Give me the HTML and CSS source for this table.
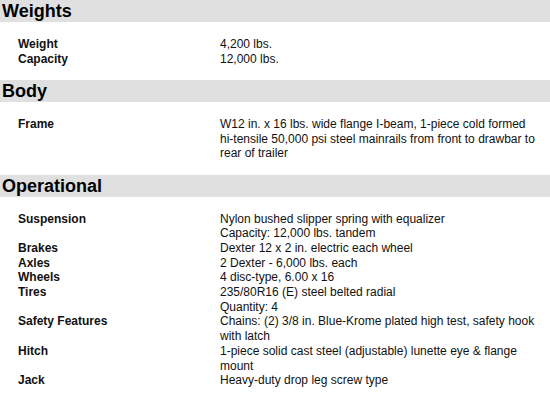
FILE: index.html
```html
<!DOCTYPE html>
<html>
<head>
<meta charset="utf-8">
<link rel="stylesheet" href="styles.css">
</head>
<body>
<section class="group">
  <h2 class="bar">Weights</h2>
  <dl class="specs">
    <dt>Weight</dt><dd>4,200 lbs.</dd>
    <dt>Capacity</dt><dd>12,000 lbs.</dd>
  </dl>
</section>
<section class="group">
  <h2 class="bar">Body</h2>
  <dl class="specs">
    <dt>Frame</dt><dd>W12 in. x 16 lbs. wide flange I-beam, 1-piece cold formed <span class="nowrap">hi-tensile</span> 50,000 psi steel mainrails from front to drawbar to rear of trailer</dd>
  </dl>
</section>
<section class="group">
  <h2 class="bar">Operational</h2>
  <dl class="specs">
    <dt>Suspension</dt><dd>Nylon bushed slipper spring with equalizer<br>Capacity: 12,000 lbs. tandem</dd>
    <dt>Brakes</dt><dd>Dexter 12 x 2 in. electric each wheel</dd>
    <dt>Axles</dt><dd>2 Dexter - 6,000 lbs. each</dd>
    <dt>Wheels</dt><dd>4 disc-type, 6.00 x 16</dd>
    <dt>Tires</dt><dd>235/80R16 (E) steel belted radial<br>Quantity: 4</dd>
    <dt>Safety Features</dt><dd>Chains: (2) 3/8 in. Blue-Krome plated high test, safety hook with latch</dd>
    <dt>Hitch</dt><dd>1-piece solid cast steel (adjustable) lunette eye &amp; flange mount</dd>
    <dt>Jack</dt><dd>Heavy-duty drop leg screw type</dd>
  </dl>
</section>
</body>
</html>
```
FILE: styles.css
```css
html, body {
  margin: 0;
  padding: 0;
  background: #fff;
}
body {
  font-family: "Liberation Sans", Arial, sans-serif;
  color: #000;
}
.bar {
  margin: 0;
  height: 22px;
  line-height: 22px;
  font-size: 18px;
  font-weight: bold;
  padding-left: 2px;
  background: #e0e0e0;
  color: #000;
}
.specs {
  margin: 0;
  padding: 15px 0 13.5px 18px;
  display: grid;
  grid-template-columns: 202px 1fr;
  font-size: 12px;
  line-height: 14.7px;
}
.specs dt {
  font-weight: bold;
  color: #111;
}
.specs dd {
  margin: 0;
  color: #111;
}
.nowrap {
  white-space: nowrap;
}
```
